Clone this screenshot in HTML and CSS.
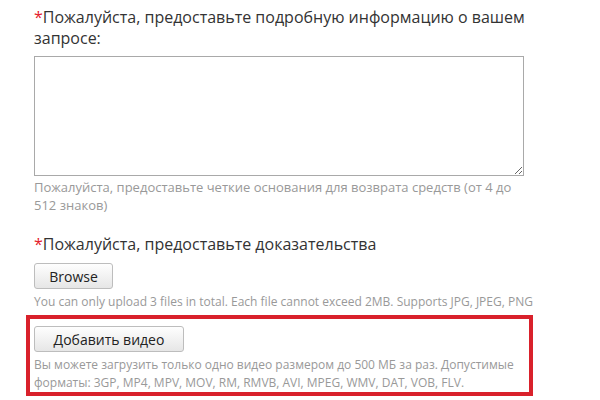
FILE: index.html
```html
<!DOCTYPE html>
<html lang="ru">
<head>
<meta charset="utf-8">
<link rel="stylesheet" href="styles.css">
</head>
<body>
<div class="form">
  <div class="label"><span class="req">*</span>Пожалуйста, предоставьте подробную информацию о вашем запросе:</div>
  <textarea class="area"></textarea>
  <div class="hint hint-area">Пожалуйста, предоставьте четкие основания для возврата средств (от 4 до 512 знаков)</div>
  <div class="label label-proof"><span class="req">*</span>Пожалуйста, предоставьте доказательства</div>
  <button class="btn btn-browse">Browse</button>
  <div class="hint hint-files">You can only upload 3 files in total. Each file cannot exceed 2MB. Supports JPG, JPEG, PNG</div>
  <div class="video-box">
    <button class="btn btn-video">Добавить видео</button>
    <div class="hint hint-video">Вы можете загрузить только одно видео размером до 500 МБ за раз. Допустимые форматы: 3GP, MP4, MPV, MOV, RM, RMVB, AVI, MPEG, WMV, DAT, VOB, FLV.</div>
  </div>
</div>
</body>
</html>
```

FILE: styles.css
```css
html, body {
  margin: 0;
  padding: 0;
  background: #fff;
}
body {
  font-family: "Open Sans", "Noto Sans", sans-serif;
  color: #333;
}
.form {
  width: 500px;
  margin-left: 34px;
  padding-top: 7px;
}
.label {
  font-size: 16px;
  line-height: 21px;
  color: #333;
}
.req {
  color: #e4202a;
}
.area {
  display: block;
  box-sizing: border-box;
  width: 490px;
  height: 120px;
  margin: 7px 0 0;
  border: 1px solid #a9a9a9;
  resize: vertical;
  font-family: inherit;
}
.hint {
  font-size: 12px;
  line-height: 18px;
  color: #999;
}
.hint-area {
  font-size: 13px;
  margin-top: 2px;
}
.label-proof {
  margin-top: 20px;
}
.btn {
  display: block;
  box-sizing: border-box;
  height: 26px;
  padding: 0 12px;
  border: 1px solid #bdbdbd;
  border-radius: 3px;
  background: linear-gradient(#fefefe, #e6e6e6);
  font-family: "Open Sans", "Noto Sans", sans-serif;
  font-size: 14px;
  color: #222;
  cursor: pointer;
}
.btn-browse {
  width: 79px;
  margin-top: 8px;
}
.hint-files {
  margin-top: 4px;
}
.video-box {
  margin: 4px 0 0 -8px;
  width: 491px;
  padding: 7px 4px 0 4px;
  border: 4px solid #d9212b;
}
.btn-video {
  width: 150px;
}
.hint-video {
  margin-top: 4px;
}
```
